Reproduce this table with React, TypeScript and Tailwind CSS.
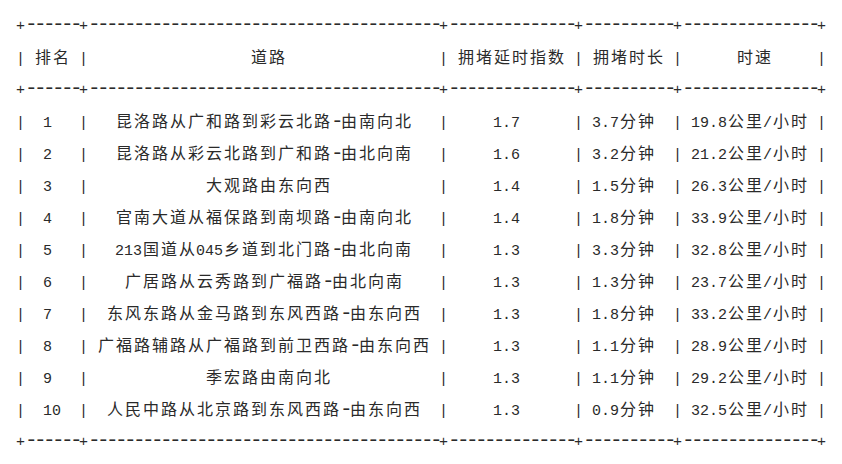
const header = ['排名', '道路', '拥堵延时指数', '拥堵时长', '时速']

const rows = [
  ['1', '昆洛路从广和路到彩云北路-由南向北', '1.7', '3.7分钟', '19.8公里/小时'],
  ['2', '昆洛路从彩云北路到广和路-由北向南', '1.6', '3.2分钟', '21.2公里/小时'],
  ['3', '大观路由东向西', '1.4', '1.5分钟', '26.3公里/小时'],
  ['4', '官南大道从福保路到南坝路-由南向北', '1.4', '1.8分钟', '33.9公里/小时'],
  ['5', '213国道从045乡道到北门路-由北向南', '1.3', '3.3分钟', '32.8公里/小时'],
  ['6', '广居路从云秀路到广福路-由北向南', '1.3', '1.3分钟', '23.7公里/小时'],
  ['7', '东风东路从金马路到东风西路-由东向西', '1.3', '1.8分钟', '33.2公里/小时'],
  ['8', '广福路辅路从广福路到前卫西路-由东向西', '1.3', '1.1分钟', '28.9公里/小时'],
  ['9', '季宏路由南向北', '1.3', '1.1分钟', '29.2公里/小时'],
  ['10', '人民中路从北京路到东风西路-由东向西', '1.3', '0.9分钟', '32.5公里/小时'],
]

const isWide = (c: string) => c.charCodeAt(0) > 0x2e80
const textWidth = (s: string) => [...s].reduce((n, c) => n + (isWide(c) ? 2 : 1), 0)

// same padding rule as prettytable: odd text gets extra space on the right
function center(text: string, width: number) {
  const w = textWidth(text)
  const excess = width - w
  const half = Math.floor(excess / 2)
  if (excess % 2) {
    return w % 2
      ? ' '.repeat(half) + text + ' '.repeat(half + 1)
      : ' '.repeat(half + 1) + text + ' '.repeat(half)
  }
  return ' '.repeat(half) + text + ' '.repeat(half)
}

const widths = header.map((h, i) => Math.max(textWidth(h), ...rows.map((r) => textWidth(r[i]))))

const border = '+' + widths.map((w) => '-'.repeat(w + 2)).join('+') + '+'
const line = (cells: string[]) => '|' + cells.map((c, i) => ' ' + center(c, widths[i]) + ' ').join('|') + '|'

function TextLine({ text }: { text: string }) {
  return (
    <div className="h-8 whitespace-nowrap leading-8">
      {[...text].map((c, i) => {
        if (isWide(c))
          return (
            <span key={i} className="inline-block w-[18px] text-center font-['Noto_Sans_CJK_SC',sans-serif] text-[16px]">
              {c}
            </span>
          )
        if (c === '-')
          return (
            <span key={i} className="inline-block w-[9px] font-['Liberation_Mono',monospace] text-[21px] leading-8 tracking-[-3.6px]">
              -
            </span>
          )
        return (
          <span key={i} className="inline-block w-[9px] text-center font-['Liberation_Mono',monospace] text-[15px]">
            {c === ' ' ? '\u00a0' : c}
          </span>
        )
      })}
    </div>
  )
}

export default function App() {
  const lines = [border, line(header), border, ...rows.map(line), border]
  return (
    <div className="min-h-[464px] bg-white pl-4 pt-2 text-[#2a2a2a]">
      {lines.map((l, i) => (
        <TextLine key={i} text={l} />
      ))}
    </div>
  )
}
